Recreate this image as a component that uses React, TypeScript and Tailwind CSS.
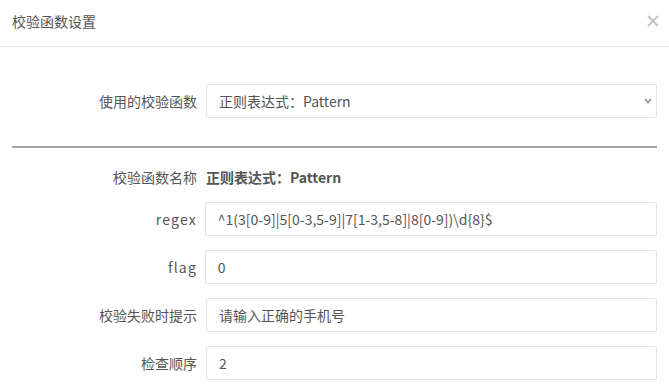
import React from "react";

const FONT = "font-['Noto_Sans_CJK_SC','Noto_Sans',sans-serif]";

function Row({
  label,
  latin,
  children,
}: {
  label: string;
  latin?: boolean;
  children: React.ReactNode;
}) {
  return (
    <div className="flex items-center h-[34px] pr-3">
      <div
        className={
          latin
            ? "w-[197px] shrink-0 text-right text-[14px] text-[#555] tracking-[1.2px] -mr-[1.2px]"
            : "w-[197px] shrink-0 text-right text-[14px] text-[#555]"
        }
      >
        {label}
      </div>
      <div className="ml-[9px] flex-1 h-full">{children}</div>
    </div>
  );
}

function Field({ value }: { value: string }) {
  return (
    <input
      readOnly
      value={value}
      className={`w-full h-full border border-[#e1e4ea] rounded-[2px] px-3 text-[14px] text-[#555] bg-white outline-none ${FONT}`}
    />
  );
}

export default function App() {
  return (
    <div className={`w-[669px] h-[385px] bg-white overflow-hidden ${FONT}`}>
      <div className="h-[47px] border-b border-[#e5e8ec] flex items-center justify-between pl-3 pr-[9px]">
        <div className="text-[14px] text-[#555] -mt-[3px]">校验函数设置</div>
        <svg width="12" height="12" viewBox="0 0 12 12" className="-mt-[5px] mr-[1px]">
          <path d="M1 1 L11 11 M11 1 L1 11" stroke="#c4c4c4" strokeWidth="2" />
        </svg>
      </div>

      <div className="pt-[37px]">
        <Row label="使用的校验函数">
          <div className="relative w-full h-full">
            <select
              defaultValue="pattern"
              className={`appearance-none w-full h-full border border-[#e1e4ea] rounded-[2px] px-3 text-[14px] text-[#555] bg-white outline-none ${FONT}`}
            >
              <option value="pattern">正则表达式：Pattern</option>
            </select>
            <svg
              width="8"
              height="6"
              viewBox="0 0 8 6"
              className="absolute right-[5px] top-[14px] pointer-events-none"
            >
              <path d="M1 1 L4 4.5 L7 1" stroke="#999" strokeWidth="1.8" fill="none" />
            </svg>
          </div>
        </Row>

        <div className="mx-3 mt-[28px] h-[2px] bg-[#a3a3a3]" />

        <div className="flex items-center h-[34px] pr-3 mt-[12px]">
          <div className="w-[197px] shrink-0 text-right text-[14px] text-[#555]">校验函数名称</div>
          <div className="ml-[9px] text-[14px] font-bold text-[#555]">正则表达式：Pattern</div>
        </div>

        <div className="mt-[8px] flex flex-col gap-[14px]">
          <Row label="regex" latin>
            <Field value={"^1(3[0-9]|5[0-3,5-9]|7[1-3,5-8]|8[0-9])\\d{8}$"} />
          </Row>
          <Row label="flag" latin>
            <Field value="0" />
          </Row>
          <Row label="校验失败时提示">
            <Field value="请输入正确的手机号" />
          </Row>
          <Row label="检查顺序">
            <Field value="2" />
          </Row>
        </div>
      </div>
    </div>
  );
}
